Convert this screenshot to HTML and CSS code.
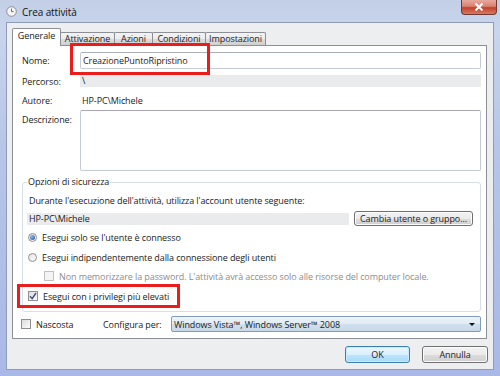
FILE: index.html
```html
<!DOCTYPE html>
<html lang="it">
<head>
    <meta charset="UTF-8">
    <title>Crea attività</title>
    <link rel="stylesheet" href="styles.css">
</head>
<body>
    <div class="window">
        <div class="titlebar">
            <svg class="app-icon" width="11" height="11" viewBox="0 0 11 11">
                <circle cx="5.5" cy="5.5" r="4.8" fill="#f4f4f2" stroke="#8a8f95" stroke-width="1"/>
                <path d="M5.5 2.6 V5.6 H7.6" fill="none" stroke="#6a6f78" stroke-width="1"/>
            </svg>
            <span class="title">Crea attività</span>
            <div class="close-btn">
                <svg width="10" height="8" viewBox="0 0 10 8">
                    <path d="M1.5 0.5 L8.5 7.5 M8.5 0.5 L1.5 7.5" stroke="#fff" stroke-width="2"/>
                </svg>
            </div>
        </div>

        <div class="client">
            <div class="tabs">
                <div class="tab active">Generale</div>
                <div class="tab w-att">Attivazione</div>
                <div class="tab w-az">Azioni</div>
                <div class="tab w-cond">Condizioni</div>
                <div class="tab w-imp">Impostazioni</div>
            </div>

            <div class="panel">
                <div class="row row-nome">
                    <span class="label">Nome:</span>
                    <div class="textbox">CreazionePuntoRipristino</div>
                </div>
                <div class="row row-percorso">
                    <span class="label">Percorso:</span>
                    <div class="readonly">\</div>
                </div>
                <div class="row row-autore">
                    <span class="label">Autore:</span>
                    <span class="value">HP-PC\Michele</span>
                </div>
                <div class="row row-desc">
                    <span class="label">Descrizione:</span>
                    <div class="textarea"></div>
                </div>

                <fieldset class="groupbox">
                    <legend>Opzioni di sicurezza</legend>
                    <div class="line">Durante l'esecuzione dell'attività, utilizza l'account utente seguente:</div>
                    <div class="account-row">
                        <div class="readonly account">HP-PC\Michele</div>
                        <div class="button btn-cambia">Cambia utente o gruppo...</div>
                    </div>
                    <div class="option opt-r1">
                        <span class="radio checked"></span>
                        <span>Esegui solo se l'utente è connesso</span>
                    </div>
                    <div class="option opt-r2">
                        <span class="radio"></span>
                        <span>Esegui indipendentemente dalla connessione degli utenti</span>
                    </div>
                    <div class="option opt-nomem disabled">
                        <span class="checkbox"></span>
                        <span>Non memorizzare la password. L'attività avrà accesso solo alle risorse del computer locale.</span>
                    </div>
                    <div class="option opt-priv">
                        <span class="checkbox checked">
                            <svg width="8" height="8" viewBox="0 0 8 8">
                                <path d="M1 4.2 L3.2 6.6 L7 1" fill="none" stroke="#3b4f87" stroke-width="1.4"/>
                            </svg>
                        </span>
                        <span>Esegui con i privilegi più elevati</span>
                    </div>
                </fieldset>

                <div class="bottom-row">
                    <div class="option opt-hidden">
                        <span class="checkbox"></span>
                        <span>Nascosta</span>
                    </div>
                    <span class="config-label">Configura per:</span>
                    <div class="combo">
                        <span>Windows Vista™, Windows Server™ 2008</span>
                        <span class="combo-arrow"></span>
                    </div>
                </div>

                <!-- red highlight boxes drawn over the dialog -->
                <div class="highlight hl-nome"></div>
                <div class="highlight hl-priv"></div>
            </div>

            <div class="buttons">
                <div class="button default btn-ok">OK</div>
                <div class="button btn-annulla">Annulla</div>
            </div>
        </div>
    </div>
</body>
</html>
```

FILE: styles.css
```css
html, body {
    margin: 0;
    padding: 0;
}

body {
    font-family: "Open Sans", "Noto Sans", sans-serif;
    font-size: 9px;
    letter-spacing: -0.1px;
    color: #222;
    background: #a9b8e6;
}

.window {
    width: 500px;
    height: 376px;
    box-sizing: border-box;
    padding: 0 6px 6px 6px;
    background: linear-gradient(to bottom, #c3cfe6 0%, #c9d5ec 8%, #b6c5e8 40%, #a9b8e6 100%);
    overflow: hidden;
}

/* title bar */
.titlebar {
    height: 22px;
    display: flex;
    align-items: center;
    position: relative;
}

.app-icon {
    margin-top: 1px;
}

.title {
    margin-left: 5px;
    font-size: 10px;
    color: #111;
    margin-top: 1px;
}

.close-btn {
    position: absolute;
    top: 0;
    right: -3px;
    width: 36px;
    height: 15px;
    box-sizing: border-box;
    border: 1px solid #6e3a35;
    border-top: none;
    border-radius: 0 0 4px 4px;
    background: linear-gradient(to bottom, #e8a99e 0%, #d9826f 45%, #c2412a 55%, #d77a62 100%);
    display: flex;
    align-items: center;
    justify-content: center;
}

/* client area */
.client {
    height: 348px;
    box-sizing: border-box;
    border: 1px solid #8e9cb6;
    background: #eceeef;
    padding-top: 5px;
}

.tabs {
    display: flex;
    align-items: flex-end;
    padding-left: 5px;
    height: 17px;
}

.tab {
    height: 13px;
    box-sizing: border-box;
    border: 1px solid #8c8f96;
    border-bottom: none;
    margin-left: -1px;
    background: linear-gradient(to bottom, #f3f3f3 0%, #ebebeb 50%, #dddddd 51%, #cfcfcf 100%);
    text-align: center;
    line-height: 12px;
    border-radius: 2px 2px 0 0;
}

.tab.active {
    height: 18px;
    width: 49px;
    margin-left: 0;
    background: #fff;
    position: relative;
    z-index: 1;
    line-height: 14px;
    margin-bottom: -1px;
}

.w-att { width: 55px; }
.w-az { width: 39px; }
.w-cond { width: 54px; }
.w-imp { width: 61px; }

.panel {
    position: relative;
    margin-left: 5px;
    width: 475px;
    height: 294px;
    box-sizing: border-box;
    border: 1px solid #8c8f96;
    background: #fff;
    padding: 6px 5px 0 9px;
}

.row {
    display: flex;
    align-items: center;
}

.label {
    width: 58px;
    flex: none;
}

.textbox {
    flex: 1;
    height: 17px;
    box-sizing: border-box;
    border: 1px solid #c5cbd3;
    border-top-color: #abb0b8;
    border-radius: 2px;
    padding-left: 2px;
    line-height: 15px;
}

.readonly {
    flex: 1;
    height: 12px;
    line-height: 12px;
    background: #e9ebed;
    padding-left: 2px;
}

.value {
    padding-left: 2px;
}

.row-nome { height: 17px; margin-bottom: 6px; }
.row-percorso { height: 12px; margin-bottom: 5px; }
.row-autore { height: 16px; margin-bottom: 2px; }

.row-desc {
    align-items: flex-start;
}

.row-desc .label {
    padding-top: 3px;
}

.textarea {
    flex: 1;
    height: 61px;
    box-sizing: border-box;
    border: 1px solid #c5cbd3;
    border-top-color: #aba6b6;
    border-radius: 2px;
}

/* security group */
.groupbox {
    margin: 5px 0 0 0;
    padding: 1px 7px 6px 6px;
    border: 1px solid #d5dfe5;
    border-radius: 3px;
    height: 136px;
    box-sizing: border-box;
}

.groupbox legend {
    padding: 0 1px;
    margin-left: -2px;
    line-height: 12px;
}

.line {
    height: 12px;
    line-height: 12px;
    margin-bottom: 4px;
    margin-top: 6px;
}

.account-row {
    display: flex;
    align-items: center;
    height: 15px;
    margin-bottom: 5px;
}

.account {
    margin-left: -2px;
}

.button {
    box-sizing: border-box;
    height: 17px;
    line-height: 15px;
    text-align: center;
    border: 1px solid #707070;
    border-radius: 3px;
    background: linear-gradient(to bottom, #f2f2f2 0%, #ebebeb 50%, #dddddd 51%, #cfcfcf 100%);
    box-shadow: inset 0 0 0 1px #fcfcfc;
}

.btn-cambia {
    width: 119px;
    height: 15px;
    line-height: 13px;
    margin-left: 5px;
}

.option {
    display: flex;
    align-items: center;
    height: 12px;
}

.opt-r1 { margin-bottom: 8px; }
.opt-r2 { margin-bottom: 7px; }
.opt-nomem { margin-bottom: 8px; padding-left: 15px; }
.opt-priv { margin-left: -1px; }

.disabled {
    color: #8d8d8d;
}

.radio {
    width: 9px;
    height: 9px;
    box-sizing: border-box;
    border: 1px solid #8e8f8f;
    border-radius: 50%;
    background: linear-gradient(to bottom right, #e4e4e4, #fbfbfb);
    margin-right: 5px;
    margin-left: -1px;
    display: flex;
    align-items: center;
    justify-content: center;
}

.radio.checked::after {
    content: "";
    width: 5px;
    height: 5px;
    border-radius: 50%;
    background: radial-gradient(circle at 35% 35%, #8fb8e8, #1f4f95);
}

.checkbox {
    width: 10px;
    height: 10px;
    box-sizing: border-box;
    border: 1px solid #8e8f8f;
    background: linear-gradient(to bottom right, #dcdcdc, #fbfbfb);
    margin-right: 5px;
    display: flex;
    align-items: center;
    justify-content: center;
}

.disabled .checkbox {
    border-color: #c2c2c2;
    background: #f4f4f4;
}

/* bottom row */
.bottom-row {
    display: flex;
    align-items: center;
    height: 16px;
    margin-top: 4px;
}

.opt-hidden {
    margin-left: -1px;
    width: 82px;
}

.config-label {
    width: 68px;
}

.combo {
    flex: 1;
    height: 16px;
    box-sizing: border-box;
    border: 1px solid #7f9cc0;
    border-radius: 2px;
    background: linear-gradient(to bottom, #eef4f9 0%, #e1ebf4 50%, #d1e0ed 51%, #c6d8e8 100%);
    display: flex;
    align-items: center;
    justify-content: space-between;
    padding: 0 5px 0 2px;
}

.combo-arrow {
    width: 0;
    height: 0;
    border-left: 3px solid transparent;
    border-right: 3px solid transparent;
    border-top: 3px solid #111;
}

/* dialog buttons */
.buttons {
    display: flex;
    justify-content: flex-end;
    gap: 12px;
    padding-right: 5px;
    margin-top: 7px;
}

.btn-ok {
    width: 65px;
    border-color: #3c7fb1;
    background: linear-gradient(to bottom, #eaf6fd 0%, #d9f0fc 50%, #bee6fd 51%, #a7d9f5 100%);
    box-shadow: inset 0 0 0 1px #c6eaff;
}

.btn-annulla {
    width: 66px;
}

/* annotation boxes */
.highlight {
    position: absolute;
    border: 3px solid #ec1c1c;
}

.hl-nome {
    left: 57px;
    top: -3px;
    width: 134px;
    height: 26px;
}

.hl-priv {
    left: 4px;
    top: 238px;
    width: 157px;
    height: 18px;
}
```
